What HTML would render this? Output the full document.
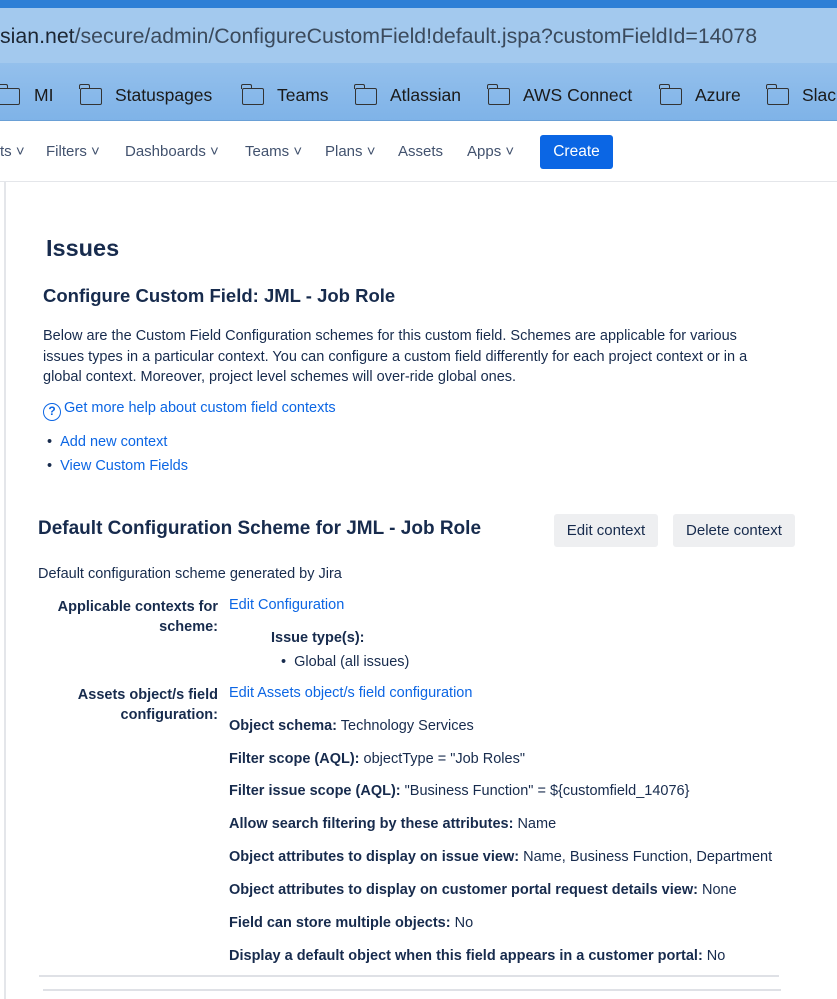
<!DOCTYPE html>
<html><head><meta charset="utf-8"><style>
*{margin:0;padding:0;box-sizing:border-box}
body{width:837px;height:999px;overflow:hidden;font-family:"Liberation Sans",sans-serif;background:#fff;color:#172b4d;position:relative}
.top{position:absolute;left:0;top:0;width:837px;height:8px;background:#2d7fd6}
.url{position:absolute;left:0;top:8px;width:837px;height:55px;background:#a3c9ee;font-size:21.3px;color:#3b4a5c;padding:16px 0 0 0;white-space:nowrap}
.url b{font-weight:normal;color:#1c2633}
.bm{position:absolute;left:0;top:63px;width:837px;height:58px;background:linear-gradient(#94c0ec,#7fb3e8);border-bottom:1px solid #6aa0d6;font-size:17.5px;color:#1a1a1a;white-space:nowrap}
.bm span{position:absolute;top:22px}
.fold{display:inline-block;width:22px;height:17px;border:1.7px solid #333;border-radius:2px;position:absolute;top:25px}
.fold:before{content:"";position:absolute;left:-1.7px;top:-5px;width:9px;height:4px;border:1.7px solid #333;border-bottom:none;border-radius:2px 2px 0 0}
.nav{position:absolute;top:121px;left:0;width:837px;height:61px;border-bottom:1px solid #e4e6ea;font-size:15px;color:#42526e;white-space:nowrap}
.nav span{position:absolute;top:22px}
.create{position:absolute;left:540px;top:135px;width:73px;height:34px;background:#0b66e4;color:#fff;border-radius:3px;font-size:15.5px;text-align:center;line-height:34px}
.vl{position:absolute;left:4px;top:182px;width:2px;height:817px;background:#e4e6ea}
.t{position:absolute;white-space:nowrap;font-size:14.5px}
a,.a{color:#0c66e4}
.bold{font-weight:bold}
.btn{position:absolute;background:#eeeff1;border-radius:3px;font-size:15px;color:#172b4d;text-align:center;line-height:33px;height:33px}
.hr{position:absolute;height:2px;background:#dfe1e6}
</style></head><body>
<div class="top"></div>
<div class="url"><b>sian.net</b>/secure/admin/ConfigureCustomField!default.jspa?customFieldId=14078</div>
<div class="bm">
<i class="fold" style="left:-2px"></i><span style="left:34px">MI</span>
<i class="fold" style="left:80px"></i><span style="left:115px">Statuspages</span>
<i class="fold" style="left:242px"></i><span style="left:277px">Teams</span>
<i class="fold" style="left:355px"></i><span style="left:390px">Atlassian</span>
<i class="fold" style="left:488px"></i><span style="left:523px">AWS Connect</span>
<i class="fold" style="left:660px"></i><span style="left:695px">Azure</span>
<i class="fold" style="left:767px"></i><span style="left:802px">Slac</span>
</div>
<div class="nav">
<span style="left:0">ts ˅</span><span style="left:46px">Filters ˅</span><span style="left:125px">Dashboards ˅</span><span style="left:245px">Teams ˅</span><span style="left:325px">Plans ˅</span><span style="left:398px">Assets</span><span style="left:467px">Apps ˅</span>
</div>
<div class="create">Create</div>
<div class="vl"></div>
<div class="t bold" style="left:46px;top:235px;font-size:23.5px;font-weight:600">Issues</div>
<div class="t bold" style="left:43px;top:285px;font-size:18.5px">Configure Custom Field: JML - Job Role</div>
<div class="t" style="left:43px;top:326px;line-height:20.5px">Below are the Custom Field Configuration schemes for this custom field. Schemes are applicable for various<br>issues types in a particular context. You can configure a custom field differently for each project context or in a<br>global context. Moreover, project level schemes will over-ride global ones.</div>
<div class="t a" style="left:43px;top:400px"><span style="display:inline-block;width:18px;height:18px;border:1.5px solid #0c66e4;border-radius:50%;font-size:12px;text-align:center;line-height:15px;font-weight:bold;vertical-align:-3px;margin-right:3px">?</span>Get more help about custom field contexts</div>
<div class="t" style="left:47px;top:434px">•&nbsp;&nbsp;<span class="a">Add new context</span></div>
<div class="t" style="left:47px;top:458px">•&nbsp;&nbsp;<span class="a">View Custom Fields</span></div>
<div class="t bold" style="left:38px;top:518px;font-size:19px">Default Configuration Scheme for JML - Job Role</div>
<div class="btn" style="left:554px;top:514px;width:104px">Edit context</div>
<div class="btn" style="left:673px;top:514px;width:122px">Delete context</div>
<div class="t" style="left:38px;top:566px">Default configuration scheme generated by Jira</div>
<div class="t bold" style="left:40px;top:597px;width:178px;text-align:right;line-height:20px;white-space:normal">Applicable contexts for scheme:</div>
<div class="t a" style="left:229px;top:597px">Edit Configuration</div>
<div class="t bold" style="left:271px;top:630px">Issue type(s):</div>
<div class="t" style="left:281px;top:654px">•&nbsp;&nbsp;Global (all issues)</div>
<div class="t bold" style="left:40px;top:685px;width:178px;text-align:right;line-height:20px;white-space:normal">Assets object/s field configuration:</div>
<div class="t a" style="left:229px;top:685px">Edit Assets object/s field configuration</div>
<div class="t" style="left:229px;top:718px"><b>Object schema:</b> Technology Services</div>
<div class="t" style="left:229px;top:751px"><b>Filter scope (AQL):</b> objectType = "Job Roles"</div>
<div class="t" style="left:229px;top:783px"><b>Filter issue scope (AQL):</b> "Business Function" = ${customfield_14076}</div>
<div class="t" style="left:229px;top:816px"><b>Allow search filtering by these attributes:</b> Name</div>
<div class="t" style="left:229px;top:849px"><b>Object attributes to display on issue view:</b> Name, Business Function, Department</div>
<div class="t" style="left:229px;top:882px"><b>Object attributes to display on customer portal request details view:</b> None</div>
<div class="t" style="left:229px;top:915px"><b>Field can store multiple objects:</b> No</div>
<div class="t" style="left:229px;top:948px"><b>Display a default object when this field appears in a customer portal:</b> No</div>
<div class="hr" style="left:39px;top:975px;width:740px"></div>
<div class="hr" style="left:43px;top:989px;width:738px"></div>
</body></html>
